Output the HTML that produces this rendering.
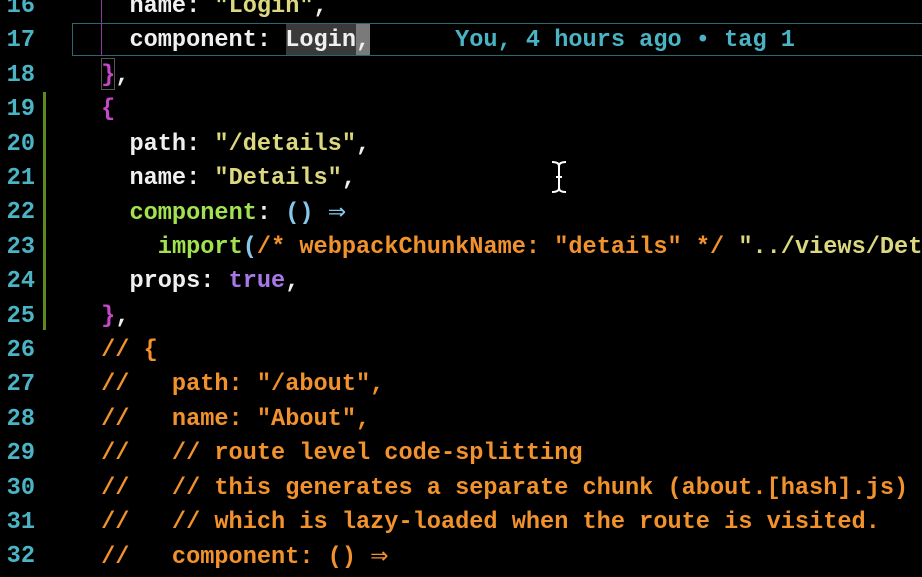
<!DOCTYPE html>
<html><head><meta charset="utf-8"><style>
html,body{margin:0;padding:0;background:#000;width:922px;height:577px;overflow:hidden}
body{position:relative;font-family:"Liberation Mono","DejaVu Sans Mono",monospace;font-size:23.6px;font-weight:bold}
.l{position:absolute;left:44.5px;height:34.4px;line-height:34.4px;white-space:pre;color:#f0f0f0}
.n{position:absolute;left:0;width:35px;text-align:right;height:34.4px;line-height:34.4px;color:#4ab3c4}
.s{color:#dcd880}.c{color:#f2922c}.g{color:#a2e24e}.p{color:#a878e8}.m{color:#c548c8}.b{color:#86c8ea}
.a{font-family:"DejaVu Sans",sans-serif;font-weight:normal;font-size:22px}
</style></head><body>
<div style="position:absolute;left:72px;top:23px;width:850px;height:33px;border:1px solid #2a6870;border-right:none;box-sizing:border-box"></div>
<div style="position:absolute;left:101px;top:0;width:1px;height:56px;background:#8a3a9a"></div>
<div style="position:absolute;left:43px;top:92px;width:3px;height:238px;background:#5c8a1c"></div>
<div style="position:absolute;left:101px;top:58px;width:14px;height:32px;border:1px solid #555;box-sizing:border-box"></div>
<div style="position:absolute;left:286px;top:24px;width:70px;height:31px;background:#3a3a3a"></div>
<div style="position:absolute;left:356px;top:24px;width:14px;height:31px;background:#7a7a7a"></div>
<div style="position:absolute;left:0;top:2px;width:922px;height:577px">
<div class="n" style="top:-12.1px">16</div><div class="l" style="top:-12.1px">      name: <span class="s">"Login"</span>,</div>
<div class="n" style="top:22.3px">17</div><div class="l" style="top:22.3px">      component: Login,      <span style="color:#4ab3c4">You, 4 hours ago • tag 1</span></div>
<div class="n" style="top:56.7px">18</div><div class="l" style="top:56.7px">    <span class="m">}</span>,</div>
<div class="n" style="top:91.1px">19</div><div class="l" style="top:91.1px">    <span class="m">{</span></div>
<div class="n" style="top:125.5px">20</div><div class="l" style="top:125.5px">      path: <span class="s">"/details"</span>,</div>
<div class="n" style="top:159.9px">21</div><div class="l" style="top:159.9px">      name: <span class="s">"Details"</span>,</div>
<div class="n" style="top:194.3px">22</div><div class="l" style="top:194.3px">      <span class="g">component</span>: <span class="b">()</span> <span class="b a">⇒</span></div>
<div class="n" style="top:228.7px">23</div><div class="l" style="top:228.7px">        <span class="g">import</span><span class="b">(</span><span class="c">/* webpackChunkName: "details" */</span> <span class="s">"../views/Det</span></div>
<div class="n" style="top:263.1px">24</div><div class="l" style="top:263.1px">      props: <span class="p">true</span>,</div>
<div class="n" style="top:297.5px">25</div><div class="l" style="top:297.5px">    <span class="m">}</span>,</div>
<div class="n" style="top:331.9px">26</div><div class="l c" style="top:331.9px">    // {</div>
<div class="n" style="top:366.3px">27</div><div class="l c" style="top:366.3px">    //   path: "/about",</div>
<div class="n" style="top:400.7px">28</div><div class="l c" style="top:400.7px">    //   name: "About",</div>
<div class="n" style="top:435.1px">29</div><div class="l c" style="top:435.1px">    //   // route level code-splitting</div>
<div class="n" style="top:469.5px">30</div><div class="l c" style="top:469.5px">    //   // this generates a separate chunk (about.[hash].js)</div>
<div class="n" style="top:503.9px">31</div><div class="l c" style="top:503.9px">    //   // which is lazy-loaded when the route is visited.</div>
<div class="n" style="top:538.3px">32</div><div class="l c" style="top:538.3px">    //   component: () <span class="a">⇒</span></div>
</div>
<svg style="position:absolute;left:550px;top:160px" width="18" height="34" viewBox="0 0 18 34"><path d="M2 2 Q9 2 9 6 Q9 2 16 2 M9 6 V28 M2 32 Q9 32 9 28 Q9 32 16 32 M6 17 H12" stroke="#fff" stroke-width="2" fill="none"/></svg>
</body></html>
